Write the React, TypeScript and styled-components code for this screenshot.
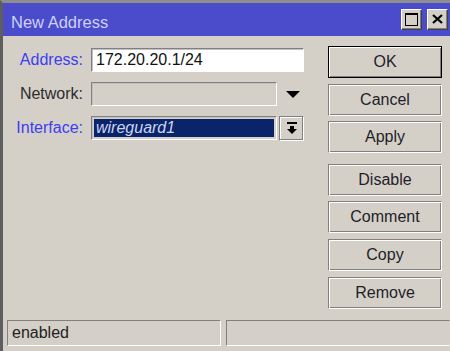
import * as React from 'react';
import styled, { createGlobalStyle } from 'styled-components';

const GlobalStyle = createGlobalStyle`
  html, body {
    margin: 0;
    padding: 0;
    background: #d4d0c8;
    overflow: hidden;
  }
  body {
    font-family: "Liberation Sans", Arial, sans-serif;
    font-size: 16px;
  }
`;

const Frame = styled.div`
  width: 450px;
  height: 351px;
  box-sizing: border-box;
  border-top: 3px solid #8e8e8e;
  border-left: 3px solid #5e5e5e;
  background: #d4d0c8;
  display: flex;
  flex-direction: column;
`;

const TitleBar = styled.div`
  height: 32px;
  flex: none;
  background: #4a4ccc;
  display: flex;
  align-items: center;
  padding: 0 2px 1px 8px;
`;

const Title = styled.div`
  flex: 1;
  margin-top: 7px;
  color: #cfd0f6;
  font-size: 16.5px;
`;

const TitleButtons = styled.div`
  display: flex;
  gap: 5px;
`;

const TitleButton = styled.div`
  width: 21px;
  height: 21px;
  box-sizing: border-box;
  background: #d4d0c8;
  border: 1px solid;
  border-color: #fff #404040 #404040 #fff;
  box-shadow: inset -1px -1px 0 #808080;
  display: flex;
  align-items: center;
  justify-content: center;
`;

const Body = styled.div`
  flex: 1;
  display: flex;
  padding-top: 10px;
`;

const Form = styled.div`
  padding-top: 2px;
  display: grid;
  grid-template-columns: 80px 213px;
  grid-auto-rows: 24px;
  column-gap: 8px;
  row-gap: 10px;
  align-items: center;
  align-content: start;
`;

const Label = styled.div<{ $required?: boolean }>`
  text-align: right;
  color: ${p => (p.$required ? '#3d3df2' : '#2c2c2c')};
  white-space: nowrap;
`;

const FieldRow = styled.div`
  display: flex;
  align-items: center;
  height: 100%;
`;

const Input = styled.div<{ $tone: 'white' | 'gray' | 'selected'; $width?: number }>`
  box-sizing: border-box;
  height: 100%;
  width: ${p => (p.$width ? `${p.$width}px` : '100%')};
  border: 1px solid;
  border-color: #808080 #fff #fff #808080;
  box-shadow: inset 1px 1px 0 #c0c0c0;
  background: ${p => (p.$tone === 'white' ? '#fff' : '#d4d0c8')};
  padding: ${p => (p.$tone === 'selected' ? '2px' : '0 4px')};
  display: flex;
  align-items: center;
  color: #111;
`;

const Selection = styled.div`
  flex: 1;
  align-self: stretch;
  background: #0a246a;
  color: #cdd4f4;
  font-style: italic;
  display: flex;
  align-items: center;
  padding-left: 2px;
`;

const DropArrow = styled.div`
  margin-left: 9px;
  width: 0;
  height: 0;
  border-left: 7px solid transparent;
  border-right: 7px solid transparent;
  border-top: 7px solid #000;
`;

const SmallButton = styled.div`
  margin-left: 2px;
  width: 25px;
  height: 25px;
  box-sizing: border-box;
  background: #d4d0c8;
  border: 1px solid;
  border-color: #808080 #fff #fff #808080;
  box-shadow: inset -1px -1px 0 #808080, inset 1px 1px 0 #fff;
  display: flex;
  align-items: center;
  justify-content: center;
`;

const ButtonColumn = styled.div`
  margin-left: 24px;
  width: 114px;
  display: flex;
  flex-direction: column;
  gap: 5.6px;
`;

const Button = styled.div<{ $default?: boolean; $spaced?: boolean }>`
  height: 32px;
  flex: none;
  box-sizing: border-box;
  display: flex;
  align-items: center;
  justify-content: center;
  color: #1e1e28;
  border: 1px solid;
  border-color: ${p => (p.$default ? '#000' : '#808080 #fff #fff #808080')};
  box-shadow: inset 1px 1px 0 #fff, inset -1px -1px 0 #808080;
  margin-top: ${p => (p.$spaced ? '5px' : '0')};
`;

const StatusBar = styled.div`
  flex: none;
  height: 26px;
  margin: 0 0 5px 4px;
  display: flex;
  gap: 5px;
`;

const StatusPanel = styled.div<{ $grow?: boolean }>`
  box-sizing: border-box;
  width: ${p => (p.$grow ? 'auto' : '214px')};
  flex: ${p => (p.$grow ? '1' : 'none')};
  border: 1px solid;
  border-color: #808080 ${p => (p.$grow ? 'transparent' : '#fff')} #fff #808080;
  display: flex;
  align-items: center;
  padding-left: 4px;
  color: #222;
`;

const MaximizeIcon = () => (
  <svg width="13" height="13" viewBox="0 0 13 13">
    <rect x="0.5" y="0.5" width="12" height="12" fill="none" stroke="#000" />
    <rect x="0" y="0" width="13" height="2" fill="#000" />
  </svg>
);

const CloseIcon = () => (
  <svg width="11" height="10" viewBox="0 0 11 10">
    <path d="M1 1 L10 9 M10 1 L1 9" stroke="#000" strokeWidth="2.2" />
  </svg>
);

const ComboIcon = () => (
  <svg width="10" height="12" viewBox="0 0 10 12">
    <rect x="0" y="0" width="10" height="2" fill="#000" />
    <rect x="3" y="4" width="4" height="3" fill="#000" />
    <path d="M0 7 L10 7 L5 12 Z" fill="#000" />
  </svg>
);

const buttons = ['OK', 'Cancel', 'Apply', 'Disable', 'Comment', 'Copy', 'Remove'];

export default function App() {
  return (
    <>
      <GlobalStyle />
      <Frame>
        <TitleBar>
          <Title>New Address</Title>
          <TitleButtons>
            <TitleButton><MaximizeIcon /></TitleButton>
            <TitleButton><CloseIcon /></TitleButton>
          </TitleButtons>
        </TitleBar>
        <Body>
          <Form>
            <Label $required>Address:</Label>
            <Input $tone="white">172.20.20.1/24</Input>

            <Label>Network:</Label>
            <FieldRow>
              <Input $tone="gray" $width={186} />
              <DropArrow />
            </FieldRow>

            <Label $required>Interface:</Label>
            <FieldRow>
              <Input $tone="selected" $width={186}>
                <Selection>wireguard1</Selection>
              </Input>
              <SmallButton><ComboIcon /></SmallButton>
            </FieldRow>
          </Form>
          <ButtonColumn>
            {buttons.map(name => (
              <Button key={name} $default={name === 'OK'} $spaced={name === 'Disable'}>
                {name}
              </Button>
            ))}
          </ButtonColumn>
        </Body>
        <StatusBar>
          <StatusPanel>enabled</StatusPanel>
          <StatusPanel $grow />
        </StatusBar>
      </Frame>
    </>
  );
}
